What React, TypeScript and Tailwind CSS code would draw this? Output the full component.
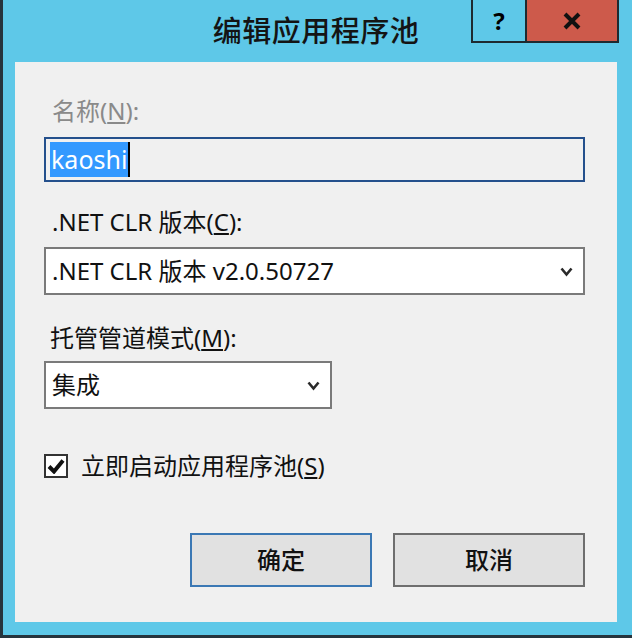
const font = { fontFamily: '"Noto Sans", "Noto Sans CJK SC", sans-serif' };

function Chevron() {
  return (
    <svg width="13" height="11" viewBox="0 0 13 11" className="shrink-0">
      <path d="M1.5 2.5 L6.5 8.5 L11.5 2.5" fill="none" stroke="#2a2a2a" strokeWidth="2.6" />
    </svg>
  );
}

function Select({ value, width }: { value: string; width: string }) {
  return (
    <div
      className={`${width} h-[48px] flex items-center justify-between bg-white border-2 border-[#7a7a7a] pl-[6px] pr-[10px] text-[24px] text-[#111]`}
    >
      <span className="leading-none">{value}</span>
      <Chevron />
    </div>
  );
}

export default function App() {
  return (
    <div
      className="w-[632px] h-[638px] flex flex-col bg-[#5ec8e8] border-l-[3px] border-b-[3px] border-[#26343d] select-none"
      style={font}
    >
      {/* Title bar */}
      <div className="relative h-[62px] shrink-0 flex items-center justify-center">
        <span className="text-[29px] font-medium text-[#141414] tracking-[0.5px] -ml-[3px] pb-[1px]">
          编辑应用程序池
        </span>
        <div className="absolute top-0 right-[13px] flex">
          <div className="w-[56px] h-[43px] flex items-center justify-center border-2 border-t-0 border-[#1e2a30] text-[24px] font-bold text-black">
            ?
          </div>
          <div className="w-[92px] h-[43px] flex items-center justify-center bg-[#cd5a4b] border-2 border-l-0 border-t-0 border-[#1e2a30]">
            <svg width="18" height="18" viewBox="0 0 18 18">
              <path d="M2 2 L16 16 M16 2 L2 16" stroke="#111" strokeWidth="4" />
            </svg>
          </div>
        </div>
      </div>

      {/* Client area */}
      <div className="ml-[12px] mr-[15px] mb-[13px] flex-1 flex flex-col bg-[#f0f0f0] pt-[34px] pl-[29px] pr-[32px] text-[24px] text-[#111]">
        <div className="h-[30px] leading-[30px] pl-[8px] text-[#8a8a8a]">
          名称(<span className="underline underline-offset-2">N</span>):
        </div>
        <div className="mt-[11px] h-[45px] flex items-center bg-[#f0f0f0] border-2 border-[#24508c] pl-[4px]">
          <span className="bg-[#3399ff] text-white h-[35px] leading-[35px] px-[1px] text-[25px]">kaoshi</span>
          <span className="w-[2px] h-[35px] bg-black" />
        </div>

        <div className="mt-[25px] h-[30px] leading-[30px] pl-[8px]">
          .NET CLR 版本(<span className="underline underline-offset-2">C</span>):
        </div>
        <div className="mt-[10px]">
          <Select value=".NET CLR 版本 v2.0.50727" width="w-full" />
        </div>

        <div className="mt-[28px] h-[30px] leading-[30px] pl-[6px]">
          托管管道模式(<span className="underline underline-offset-2">M</span>):
        </div>
        <div className="mt-[8px]">
          <Select value="集成" width="w-[288px]" />
        </div>

        <div className="mt-[45px] h-[24px] flex items-center gap-[13px]">
          <div className="w-[24px] h-[24px] flex items-center justify-center bg-white border-2 border-[#333]">
            <svg width="18" height="16" viewBox="0 0 18 16">
              <path d="M2 8.5 L7 13.5 L16 2.5" fill="none" stroke="#111" strokeWidth="4" strokeLinejoin="miter" />
            </svg>
          </div>
          <span className="leading-none">
            立即启动应用程序池(<span className="underline underline-offset-2">S</span>)
          </span>
        </div>

        <div className="mt-[55px] flex justify-end gap-[21px]">
          <div className="w-[182px] h-[54px] flex items-center justify-center bg-[#e1e1e1] border-2 border-[#3b78b4] font-medium">
            确定
          </div>
          <div className="w-[192px] h-[54px] flex items-center justify-center bg-[#e1e1e1] border-2 border-[#6e6e6e] font-medium">
            取消
          </div>
        </div>
      </div>
    </div>
  );
}
